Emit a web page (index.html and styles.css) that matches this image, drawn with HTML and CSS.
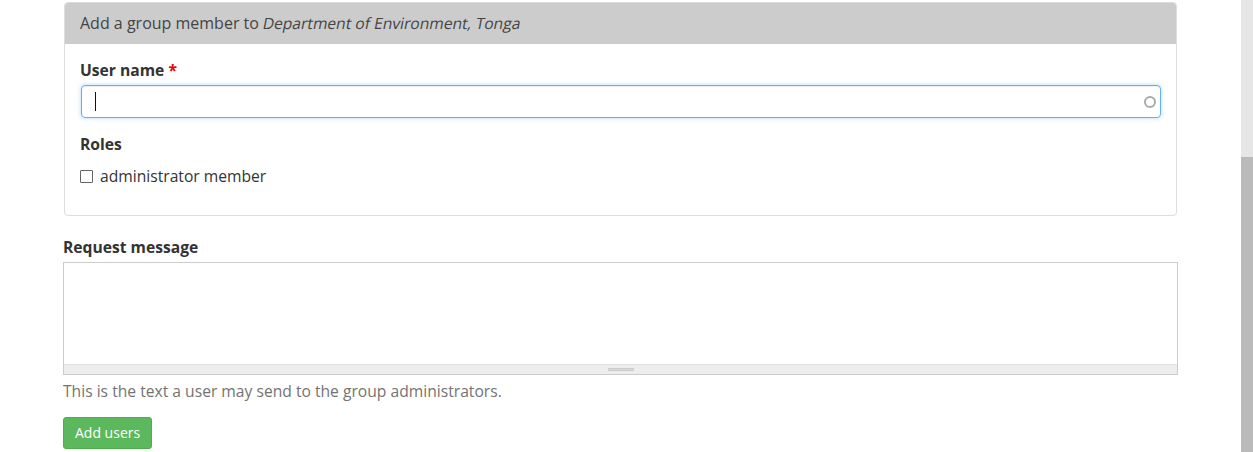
FILE: index.html
```html
<!DOCTYPE html>
<html lang="en">
<head>
<meta charset="utf-8">
<title>Add a group member</title>
<link rel="stylesheet" href="styles.css">
</head>
<body>
<div class="page">
  <main class="main">
    <form class="form">
      <section class="panel">
        <div class="panel-head">Add a group member to <em class="slant">Department of Environment, Tonga</em></div>
        <div class="panel-body">
          <div class="group">
            <div class="label user-label">User name <span class="req">*</span></div>
            <div class="input">
              <span class="caret"></span>
              <span class="ring"></span>
            </div>
          </div>
          <div class="group roles">
            <div class="label">Roles</div>
            <div class="check"><span class="box"></span><span>administrator member</span></div>
          </div>
        </div>
      </section>
      <div class="label msg-label">Request message</div>
      <div class="textarea">
        <div class="ta-body"></div>
        <div class="grip"><span class="grip-bar"></span></div>
      </div>
      <p class="help">This is the text a user may send to the group administrators.</p>
      <div class="btn">Add users</div>
    </form>
  </main>
  <div class="scrollbar"><div class="track"></div><div class="thumb"></div></div>
</div>
</body>
</html>
```
FILE: styles.css
```css
html, body {
  margin: 0;
  padding: 0;
  background: #fff;
}
body {
  font-family: "Open Sans", "Liberation Sans", sans-serif;
  font-size: 15.65px;
  line-height: 21px;
  color: #333;
}
.page {
  display: flex;
  height: 452px;
  overflow: hidden;
}
.main {
  flex: 1;
  padding-left: 63px;
  padding-right: 63px;
}
.form {
  width: 1115px;
}
.panel {
  margin: 2px 1px 0 1px;
  border: 1px solid #ddd;
  border-radius: 4px;
  overflow: hidden;
}
.panel-head {
  background: #cccccc;
  padding: 10px 15px 10px 15px;
  color: #444;
  font-size: 16px;
}
.slant {
  display: inline-block;
  margin-left: -2px;
  font-style: normal;
  font-size: 15.6px;
  transform: skewX(-11deg);
  transform-origin: 0 100%;
}
.panel-body {
  padding: 16px 15px 28px 15px;
}
.label {
  font-weight: 700;
  color: #333;
}
.req {
  color: #e00;
}
.user-label {
  margin-bottom: 4px;
}
.roles {
  margin-top: 16px;
}
.roles .label {
  margin-bottom: 11px;
}
.input {
  display: flex;
  align-items: center;
  justify-content: space-between;
  height: 31px;
  margin-left: 1px;
  border: 1px solid #66afe9;
  border-radius: 4px;
  box-shadow: inset 0 1px 1px rgba(0,0,0,.075), 0 0 4px rgba(102,175,233,.5);
  padding: 0 4px 0 13px;
}
.caret {
  display: block;
  width: 1px;
  height: 19px;
  background: #111;
}
.ring {
  display: block;
  width: 8px;
  height: 8px;
  border: 2px solid #aaa;
  border-radius: 50%;
}
.check {
  display: flex;
  align-items: center;
  gap: 7px;
  margin-left: 0;
  color: #333;
}
.box {
  display: block;
  width: 11px;
  height: 11px;
  border: 1px solid #666;
  border-radius: 1px;
}
.msg-label {
  margin-top: 21px;
  margin-bottom: 4px;
}
.textarea {
  border: 1px solid #ccc;
  height: 111px;
  display: flex;
  flex-direction: column;
}
.ta-body {
  flex: 1;
  background: #fff;
}
.grip {
  height: 9px;
  background: #ededed;
  border-top: 1px solid #e4e4e4;
  display: flex;
  justify-content: center;
  align-items: center;
}
.grip-bar {
  display: block;
  width: 26px;
  height: 3px;
  border-top: 1px solid #ccc;
  border-bottom: 1px solid #ccc;
  background: #d8d8d8;
  box-sizing: border-box;
}
.help {
  margin: 6px 0 0 0;
  color: #737373;
}
.btn {
  display: inline-block;
  margin-top: 15px;
  background: #5cb85c;
  border: 1px solid #4cae4c;
  border-radius: 3px;
  color: #fff;
  font-size: 14px;
  line-height: 20px;
  padding: 5px 11px;
}
.scrollbar {
  width: 12px;
  display: flex;
  flex-direction: column;
}
.track {
  height: 157px;
  background: #e6e6e6;
}
.thumb {
  flex: 1;
  background: #bababa;
}
```
